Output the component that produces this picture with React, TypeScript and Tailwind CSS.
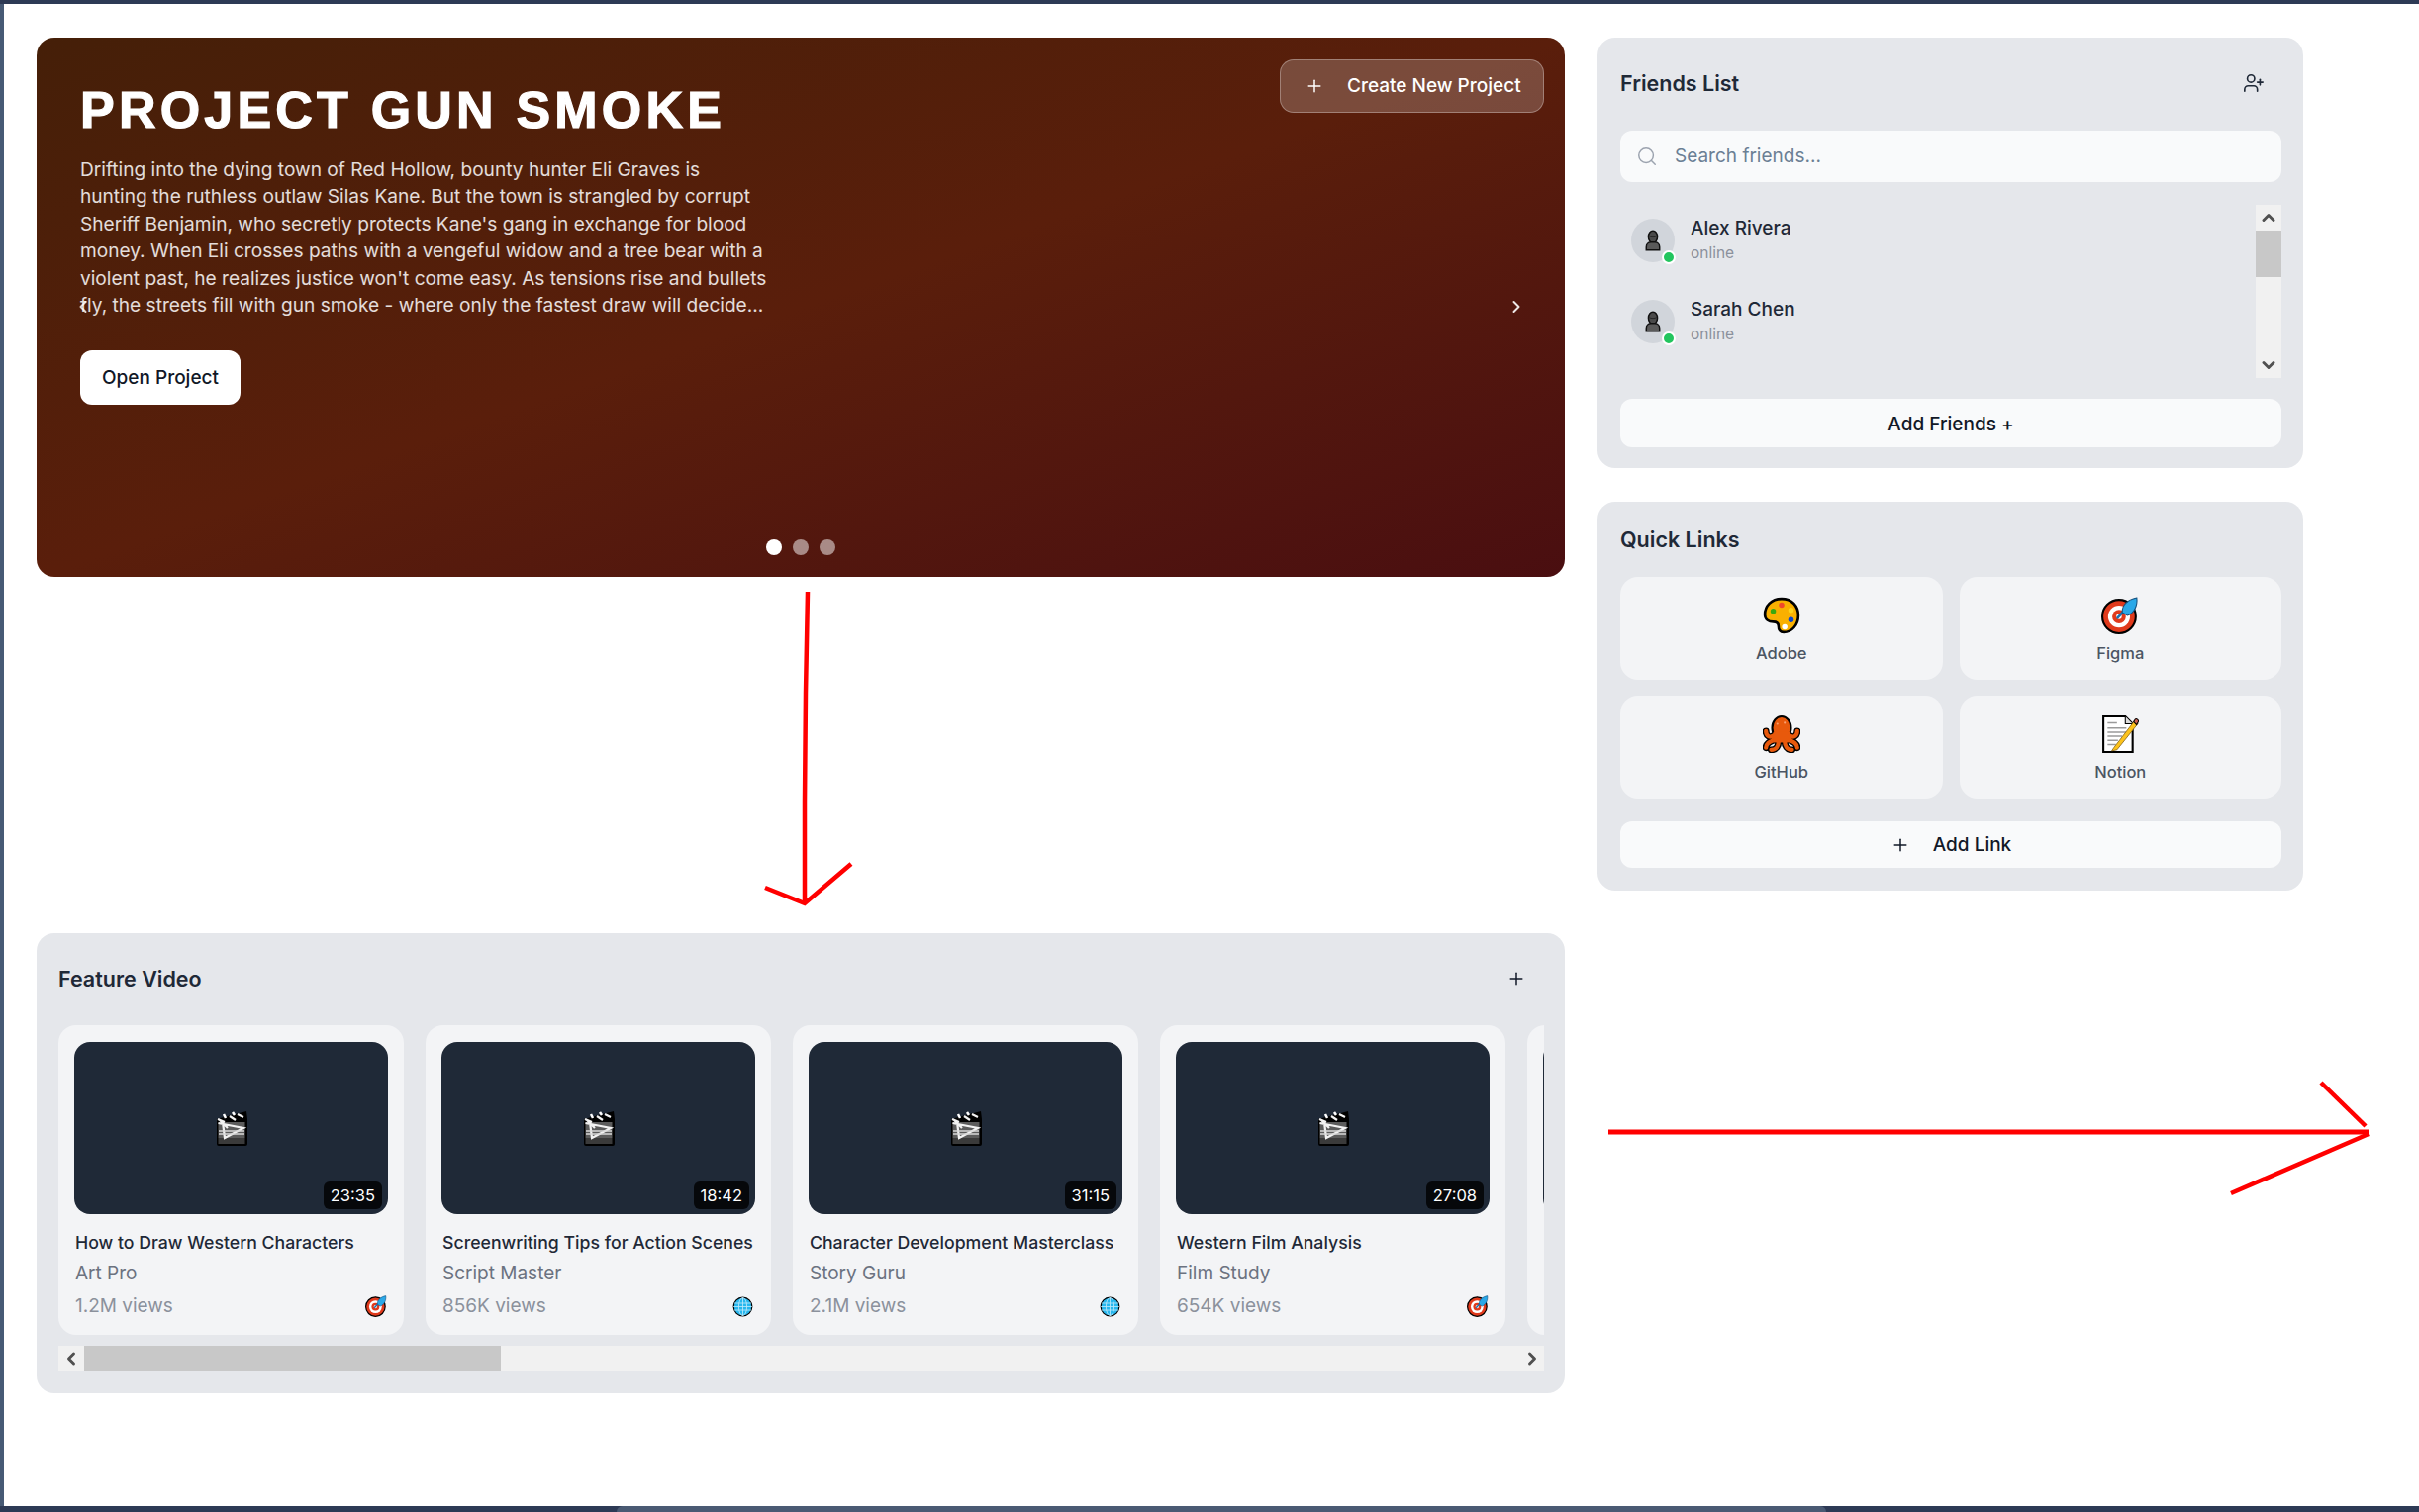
import { ChevronDown, ChevronLeft, ChevronRight, ChevronUp, Plus, Search, UserPlus } from "lucide-react";

const friends = [
  { name: "Alex Rivera", status: "online" },
  { name: "Sarah Chen", status: "online" },
];

const videos = [
  { title: "How to Draw Western Characters", author: "Art Pro", views: "1.2M views", time: "23:35", badge: "target" },
  { title: "Screenwriting Tips for Action Scenes", author: "Script Master", views: "856K views", time: "18:42", badge: "globe" },
  { title: "Character Development Masterclass", author: "Story Guru", views: "2.1M views", time: "31:15", badge: "globe" },
  { title: "Western Film Analysis", author: "Film Study", views: "654K views", time: "27:08", badge: "target" },
  { title: "Sound Design Basics", author: "Audio Lab", views: "412K views", time: "14:20", badge: "target" },
];

function Palette({ className }: { className?: string }) {
  return (
    <svg viewBox="0 0 36 36" className={className}>
      <path
        d="M18 2C8 2 2 9 2 17c0 5 4 7 8 7 3 0 5 1 5 4 0 4 2 6 5 6 8 0 14-7 14-16S28 2 18 2z"
        fill="#f9b000"
        stroke="#000"
        strokeWidth="2.5"
      />
      <circle cx="10" cy="14" r="2.6" fill="#3aa80f" />
      <circle cx="18" cy="8" r="2.6" fill="#f0482a" />
      <circle cx="27" cy="13" r="2.6" fill="#fcd21c" />
      <circle cx="27" cy="22" r="2.6" fill="#0f46c8" />
      <circle cx="21" cy="29" r="2.6" fill="#fff" />
    </svg>
  );
}

function Target({ className }: { className?: string }) {
  return (
    <svg viewBox="0 0 36 36" className={className}>
      <circle cx="17" cy="19" r="16" fill="#e03a1c" stroke="#000" strokeWidth="2" />
      <circle cx="17" cy="19" r="10.500" fill="#fff" />
      <circle cx="17" cy="19" r="6.500" fill="#e03a1c" />
      <circle cx="17" cy="19" r="2.600" fill="#fff" />
      <path d="M15 21 24 11" stroke="#1b6fb0" strokeWidth="2.4" />
      <path d="M20 15c0-7 5-12 14-14 1 8-3 15-9 17z" fill="#2aa8e8" stroke="#14507e" strokeWidth="1" />
    </svg>
  );
}

function Octopus({ className }: { className?: string }) {
  const arms = "M11 19C7 22 3 20 3 15M25 19c4 3 8 1 8-4M12 23c-4 2-9 3-9 8M24 23c4 2 9 3 9 8M15 25c0 4-2 8-7 8M21 25c0 4 2 8 7 8";
  return (
    <svg viewBox="0 0 36 36" className={className}>
      <path d={arms} stroke="#000" strokeWidth="6.500" fill="none" strokeLinecap="round" />
      <ellipse cx="18" cy="12" rx="9" ry="11" fill="#e8590c" stroke="#000" strokeWidth="2" />
      <path d={arms} stroke="#e8590c" strokeWidth="4" fill="none" strokeLinecap="round" />
      <path d="M10 16h16v10H10z" fill="#e8590c" />
      <circle cx="14" cy="8" r="1" fill="#f9a070" />
      <circle cx="21" cy="7" r="1" fill="#f9a070" />
    </svg>
  );
}

function Memo({ className }: { className?: string }) {
  return (
    <svg viewBox="0 0 36 36" className={className}>
      <path d="M2 1h21l7 7v27H2z" fill="#fff" stroke="#000" strokeWidth="2" />
      <path d="M23 1v7h7" fill="#ddd" stroke="#000" strokeWidth="1" />
      <path d="M6 7h9M6 12h18M6 16h18M6 20h14M6 24h10M6 28h8" stroke="#9a9a9a" strokeWidth="1.4" />
      <path d="M12 31 32 5l3 3-20 25-5 1z" fill="#fcc21b" stroke="#7a5a10" strokeWidth="0.7" />
      <path d="M31 6l1.6-2.4c1-1 3.6 1 2.8 2.6L33.8 9z" fill="#d0604f" stroke="#000" strokeWidth="1" />
    </svg>
  );
}

function Clapper({ className }: { className?: string }) {
  return (
    <svg viewBox="0 0 32 35" className={className}>
      <path d="M1 8 31 0l1 8v25a2 2 0 0 1-2 2H3a2 2 0 0 1-2-2z" fill="#000" />
      <rect x="2.500" y="11" width="27" height="16" fill="#5c5c5c" />
      <rect x="2.500" y="27" width="27" height="6" fill="#3a3a3a" />
      <path d="M2 8 9 11M3 8l9 9M14 5l6 4M22 3l6 3M2.500 12 28 17 9 27 7 11" stroke="#f2f2f2" strokeWidth="2.200" fill="none" />
      <path d="M3 20h26M3 23h26" stroke="#d8d8d8" strokeWidth="1.600" />
      <path d="M8 3l2 4M17 1l2 3" stroke="#fff" strokeWidth="2.500" />
    </svg>
  );
}

function GlobeEmoji({ className }: { className?: string }) {
  return (
    <svg viewBox="0 0 36 36" className={className}>
      <circle cx="18" cy="18" r="16" fill="#27b7ee" stroke="#000" strokeWidth="2" />
      <g stroke="#bfeafb" strokeWidth="1.4" fill="none">
        <ellipse cx="18" cy="18" rx="7" ry="15.5" />
        <path d="M18 2v32M3 12h30M2 18h32M3 24h30" />
      </g>
    </svg>
  );
}

function Bust({ className }: { className?: string }) {
  return (
    <svg viewBox="0 0 36 36" className={className}>
      <ellipse cx="18" cy="12" rx="7.500" ry="10" fill="#4a4a4a" stroke="#111" strokeWidth="2.400" />
      <path d="M12 11c3 2 9 2 12 0" stroke="#222" strokeWidth="1.500" fill="none" />
      <path d="M7 34v-5c0-5 4-8 8-8h6c4 0 8 3 8 8v5z" fill="#5a5a5a" stroke="#111" strokeWidth="2.400" />
    </svg>
  );
}

function FriendRow({ name, status }: { name: string; status: string }) {
  return (
    <div className="mb-[10px] flex h-[72px] items-center gap-[16px] pl-[11px]">
      <div className="relative flex h-[44px] w-[44px] items-center justify-center rounded-full bg-[#d1d5db]">
        <Bust className="h-[22px] w-[22px]" />
        <span className="absolute bottom-[-2px] right-[-1px] h-[14px] w-[14px] rounded-full border-2 border-white bg-[#22c55e]" />
      </div>
      <div>
        <div className="text-[19px] font-medium leading-[26px] text-[#1f2937]">{name}</div>
        <div className="text-[15.500px] leading-[24px] text-[#8b919c]">{status}</div>
      </div>
    </div>
  );
}

function LinkTile({ label, icon }: { label: string; icon: React.ReactNode }) {
  return (
    <div className="flex h-[104px] flex-col items-center rounded-[18px] bg-[#f3f4f6] pt-[20px]">
      {icon}
      <span className="mt-[9px] text-[16.500px] font-medium leading-[20px] text-[#4b5563]">{label}</span>
    </div>
  );
}

function VideoCard({ video }: { video: (typeof videos)[number] }) {
  return (
    <div className="h-[313px] w-[349px] shrink-0 rounded-[18px] bg-[#f3f4f6] p-[16px] pt-[17px]">
      <div className="relative flex h-[174px] items-center justify-center rounded-[16px] bg-[#1f2937]">
        <Clapper className="h-[35px] w-[32px]" />
        <span className="absolute bottom-[5px] right-[6px] rounded-[6px] bg-black/80 px-[7px] py-[3px] text-[16.500px] leading-[22px] text-white">
          {video.time}
        </span>
      </div>
      <div className="mt-[16px] whitespace-nowrap px-px text-[17.700px] font-medium leading-[26px] text-[#1f2937]">
        {video.title}
      </div>
      <div className="mt-[5px] whitespace-nowrap px-px text-[19px] leading-[26px] text-[#6b7280]">{video.author}</div>
      <div className="mt-[7px] flex items-center justify-between px-px text-[19px] leading-[26px] text-[#8b919c]">
        <span>{video.views}</span>
        {video.badge === "target" ? <Target className="h-[22px] w-[22px]" /> : <GlobeEmoji className="mr-px h-[21px] w-[21px]" />}
      </div>
    </div>
  );
}

export default function App() {
  return (
    <div className="relative flex h-[1528px] w-[2444px] flex-col overflow-hidden bg-white font-['Inter',sans-serif]">
      <div className="h-[4px] shrink-0 bg-[#2d3a55]" />
      <div className="flex min-h-0 flex-1">
        <div className="w-[4px] shrink-0 bg-[#475a75]" />
        <main className="flex flex-1 gap-[33px] pl-[33px] pt-[34px]">
          <div className="w-[1544px] shrink-0">
            <section className="relative h-[545px] rounded-[18px] bg-linear-to-br from-[#451f08] via-[#5a1e0b] to-[#4a0e10] pl-[44px] pt-[44px]">
              <h1 className="font-['Liberation_Sans',sans-serif] text-[52px] font-bold leading-[58px] tracking-[4.200px] text-white [-webkit-text-stroke:1.200px_white]">
                PROJECT GUN SMOKE
              </h1>
              <p className="mt-[18px] whitespace-nowrap text-[19.100px] leading-[27.400px] text-white/85">
                Drifting into the dying town of Red Hollow, bounty hunter Eli Graves is
                <br />
                hunting the ruthless outlaw Silas Kane. But the town is strangled by corrupt
                <br />
                Sheriff Benjamin, who secretly protects Kane's gang in exchange for blood
                <br />
                money. When Eli crosses paths with a vengeful widow and a tree bear with a
                <br />
                violent past, he realizes justice won't come easy. As tensions rise and bullets
                <br />
                fly, the streets fill with gun smoke - where only the fastest draw will decide...
              </p>
              <button className="mt-[32px] h-[55px] w-[162px] rounded-[12px] bg-white text-[19px] font-medium text-[#111827]">
                Open Project
              </button>
              <button className="absolute right-[21px] top-[22px] flex h-[54px] w-[267px] items-center gap-[23px] rounded-[14px] border border-white/30 bg-white/20 pl-[24px] text-[19px] font-medium text-white">
                <Plus size={20} strokeWidth={1.8} />
                Create New Project
              </button>
              <ChevronLeft size={20} strokeWidth={2.400} className="absolute left-[37px] top-[262px] text-white/80" />
              <ChevronRight size={20} strokeWidth={2.400} className="absolute right-[39px] top-[262px] text-white/90" />
              <div className="absolute bottom-[22px] left-0 right-0 flex justify-center gap-[11px]">
                <span className="h-[16px] w-[16px] rounded-full bg-white" />
                <span className="h-[16px] w-[16px] rounded-full bg-white/50" />
                <span className="h-[16px] w-[16px] rounded-full bg-white/50" />
              </div>
            </section>

            <section className="mt-[360px] h-[465px] rounded-[18px] bg-[#e5e7eb] px-[22px] pt-[22px]">
              <div className="flex h-[48px] items-center justify-between pr-[17px]">
                <h2 className="text-[21.500px] font-semibold text-[#1f2937]">Feature Video</h2>
                <Plus size={20} strokeWidth={1.8} className="text-[#111827]" />
              </div>
              <div className="mt-[23px] flex w-[1501px] gap-[22px] overflow-hidden">
                {videos.map((video) => (
                  <VideoCard key={video.title} video={video} />
                ))}
              </div>
              <div className="mt-[11px] flex h-[26px] w-[1501px] items-center bg-[#f1f1f1]">
                <ChevronLeft size={20} strokeWidth={3.500} className="ml-[3px] text-[#505050]" />
                <div className="ml-[3px] h-full w-[421px] bg-[#c8c8c8]" />
                <ChevronRight size={20} strokeWidth={3.500} className="ml-auto mr-[2px] text-[#505050]" />
              </div>
            </section>
          </div>

          <aside className="flex w-[713px] flex-col gap-[34px]">
            <section className="h-[435px] rounded-[18px] bg-[#e5e7eb] pl-[23px] pr-[22px] pt-[22px]">
              <div className="flex h-[48px] items-center justify-between pr-[17px]">
                <h2 className="text-[21.500px] font-semibold text-[#1f2937]">Friends List</h2>
                <UserPlus size={22} strokeWidth={1.8} className="text-[#1f2937]" />
              </div>
              <div className="mt-[24px] flex h-[52px] items-center gap-[17px] rounded-[12px] bg-[#f9fafb] pl-[16px]">
                <Search size={22} strokeWidth={1.6} className="text-[#9ca3af]" />
                <span className="pt-px text-[19px] text-[#6b7f94]">Search friends...</span>
              </div>
              <div className="mt-[23px] flex h-[175px]">
                <div className="flex-1">
                  {friends.map((friend) => (
                    <FriendRow key={friend.name} name={friend.name} status={friend.status} />
                  ))}
                </div>
                <div className="flex w-[26px] flex-col items-center bg-[#f1f1f1]">
                  <ChevronUp size={20} strokeWidth={3.500} className="my-[3px] text-[#505050]" />
                  <div className="h-[47px] w-full bg-[#c8c8c8]" />
                  <ChevronDown size={20} strokeWidth={3.500} className="mb-[3px] mt-auto text-[#505050]" />
                </div>
              </div>
              <button className="mt-[21px] h-[49px] w-full rounded-[12px] bg-[#f9fafb] pt-[3px] text-[19px] font-medium text-[#111827]">
                Add Friends +
              </button>
            </section>

            <section className="h-[393px] rounded-[18px] bg-[#e5e7eb] pl-[23px] pr-[22px] pt-[14px]">
              <h2 className="flex h-[48px] items-center text-[21.500px] font-semibold text-[#1f2937]">Quick Links</h2>
              <div className="mt-[14px] grid grid-cols-2 gap-x-[17px] gap-y-[16px]">
                <LinkTile label="Adobe" icon={<Palette className="h-[38px] w-[38px]" />} />
                <LinkTile label="Figma" icon={<Target className="h-[38px] w-[38px]" />} />
                <LinkTile label="GitHub" icon={<Octopus className="h-[38px] w-[38px]" />} />
                <LinkTile label="Notion" icon={<Memo className="h-[38px] w-[38px]" />} />
              </div>
              <button className="mt-[23px] flex h-[47px] w-full items-center justify-center gap-[23px] rounded-[12px] bg-[#f9fafb] pt-px text-[19px] font-medium text-[#111827]">
                <Plus size={20} strokeWidth={1.8} />
                Add Link
              </button>
            </section>
          </aside>
        </main>
      </div>
      <div className="relative h-[6px] shrink-0 bg-[#2d3a55]">
        <div className="absolute bottom-0 left-[623px] top-0 w-[1222px] rounded-t-[6px] bg-[#4a5a73]" />
      </div>

      {/* hand-drawn annotation arrows */}
      <svg className="pointer-events-none absolute left-0 top-0" width="2444" height="1528" fill="none" stroke="#ff0000" strokeWidth="4.500">
        <path d="M816 598 814 700 813 810 813 913" />
        <path d="M773 897 813 913 860 873" />
        <path d="M1625 1144H2393" strokeWidth="5" />
        <path d="M2345 1094 2390 1138" />
        <path d="M2254 1206 2393 1146" />
      </svg>
    </div>
  );
}
